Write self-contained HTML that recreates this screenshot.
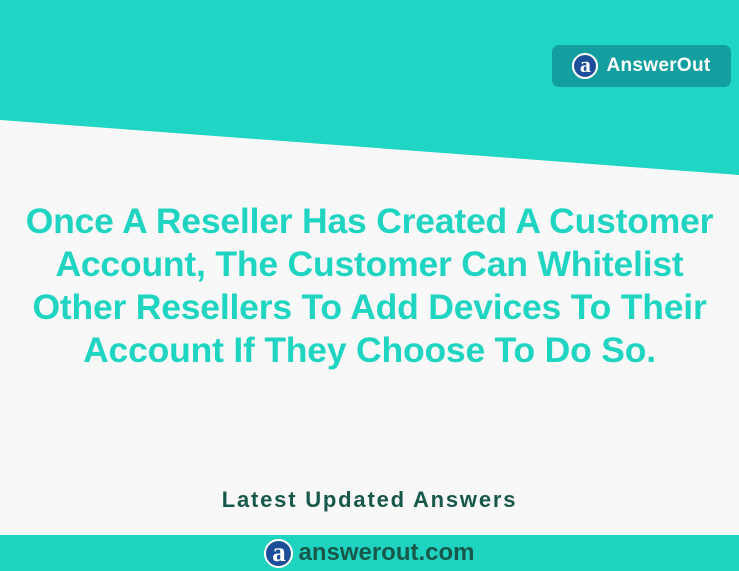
<!DOCTYPE html>
<html><head><style>
body{margin:0;width:739px;height:571px;overflow:hidden;background:#f8f8f8;font-family:"Liberation Sans",sans-serif;position:relative}
.top{position:absolute;left:0;top:0;width:739px;height:571px}
.badge{position:absolute;left:552px;top:45px;width:179px;height:42px;background:#139e9f;border-radius:7px;display:flex;align-items:center;justify-content:center;color:#fff;font-weight:bold;font-size:19px;letter-spacing:0.3px}
.logo{display:inline-block;width:26px;height:26px;border-radius:50%;background:#1c4e9a;border:2px solid #fff;box-sizing:border-box;color:#fff;font-family:"Liberation Serif",serif;font-size:22px;line-height:19px;text-align:center;margin-right:8px}
h1{position:absolute;left:0;top:200px;width:739px;margin:0;text-align:center;color:#1fd5c2;font-size:35.5px;line-height:43px;font-weight:bold;letter-spacing:-0.2px}
.latest{position:absolute;left:0;top:487px;width:739px;text-align:center;color:#17584a;font-weight:bold;font-size:22px;letter-spacing:1.8px}
.foot{position:absolute;left:0;top:535px;width:739px;height:36px;background:#1fd3c1;display:flex;align-items:center;justify-content:center;color:#17584a;font-weight:bold;font-size:24px;letter-spacing:0px}
.foot .logo{width:29px;height:29px;font-size:27px;line-height:22px;margin-right:5px}
</style></head><body>
<svg class="top" viewBox="0 0 739 571"><polygon points="0,0 739,0 739,175 0,120" fill="#1fd5c3"/></svg>
<div class="badge"><span class="logo">a</span>AnswerOut</div>
<h1>Once A Reseller Has Created A Customer<br>Account, The Customer Can Whitelist<br>Other Resellers To Add Devices To Their<br>Account If They Choose To Do So.</h1>
<div class="latest">Latest Updated Answers</div>
<div class="foot"><span class="logo">a</span>answerout.com</div>
</body></html>
